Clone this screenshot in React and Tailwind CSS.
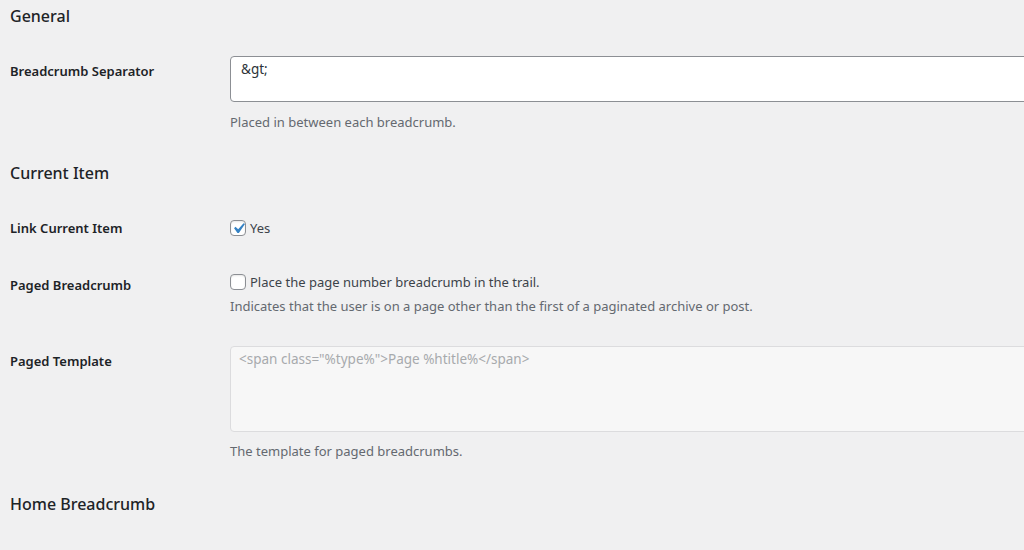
import React from 'react';

const font = { fontFamily: '"Noto Sans", "Open Sans", sans-serif' };

const Checkbox = ({ checked }) => (
  <span className="relative inline-block w-4 h-4 shrink-0 rounded-[4px] border border-[#8c8f94] bg-white shadow-[inset_0_1px_2px_rgba(0,0,0,0.1)]">
    {checked && (
      <svg viewBox="0 0 20 20" className="absolute -left-[3px] -top-[3px] w-[21px] h-[21px]">
        <path d="M14.83 4.89l1.34.94-5.81 8.38H9.02L5.78 9.67l1.34-1.25 2.57 2.4z" fill="#3582c4" />
      </svg>
    )}
  </span>
);

const labelCls = 'w-[220px] shrink-0 text-[13px] leading-[18px] font-semibold text-[#1d2327]';
const headCls = 'text-[16px] leading-[22px] font-medium text-[#1d2327]';

export default function App() {
  return (
    <div className="min-h-screen w-full overflow-hidden bg-[#f0f0f1] pl-[10px] text-[#3c434a]" style={font}>
      <h2 className={`pt-[5px] ${headCls}`}>General</h2>

      <div className="mt-[29px] flex">
        <div className={`${labelCls} pt-[6px]`}>Breadcrumb Separator</div>
        <textarea
          readOnly
          defaultValue={'&gt;'}
          className="h-[46px] w-[1000px] shrink-0 resize-none rounded-[4px] border border-[#8c8f94] bg-white pl-[10px] pr-2 py-[2px] text-[13.5px] leading-[20px] text-[#2c3338] outline-none"
        />
      </div>
      <p className="ml-[220px] mt-[11px] text-[13px] leading-[18px] text-[#646970]">Placed in between each breadcrumb.</p>

      <h2 className={`mt-[31px] ${headCls}`}>Current Item</h2>

      <div className="mt-[35px] flex">
        <div className={labelCls}>Link Current Item</div>
        <label className="flex items-center gap-[4px] text-[13px] leading-[18px] text-[#3c434a]">
          <Checkbox checked />
          Yes
        </label>
      </div>

      <div className="mt-[39px] flex">
        <div className={labelCls}>Paged Breadcrumb</div>
        <div className="-mt-[3px]">
          <label className="flex items-center gap-[4px] text-[13px] leading-[18px] text-[#3c434a]">
            <Checkbox />
            Place the page number breadcrumb in the trail.
          </label>
          <p className="mt-[6px] text-[13px] leading-[18px] text-[#646970]">
            Indicates that the user is on a page other than the first of a paginated archive or post.
          </p>
        </div>
      </div>

      <div className="mt-[31px] flex">
        <div className={`${labelCls} pt-[6px]`}>Paged Template</div>
        <textarea
          disabled
          defaultValue={'<span class="%type%">Page %htitle%</span>'}
          className="h-[86px] w-[1000px] shrink-0 resize-none rounded-[4px] border border-[#dcdcde] bg-[#f7f7f7] px-2 py-[2px] text-[13.5px] leading-[20px] text-[#a7aaad] outline-none"
        />
      </div>
      <p className="ml-[220px] mt-[10px] text-[13px] leading-[18px] text-[#646970]">The template for paged breadcrumbs.</p>

      <h2 className={`mt-[33px] ${headCls}`}>Home Breadcrumb</h2>
    </div>
  );
}
